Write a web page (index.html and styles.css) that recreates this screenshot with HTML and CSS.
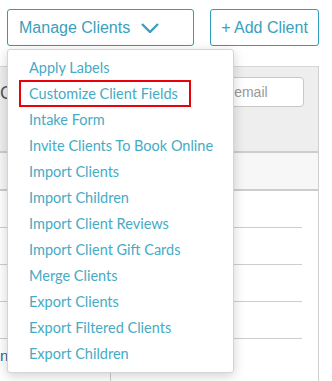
FILE: index.html
```html
<!DOCTYPE html>
<html lang="en">
	<head>
		<meta charset="utf-8">
		<title>Clients</title>
		<link rel="stylesheet" href="styles.css">
	</head>
	<body>
		<div class="toolbar">
			<div class="manage">
				<button type="button" class="btn btn-manage">
					Manage Clients
					<svg class="chevron" width="18" height="10" viewBox="0 0 18 10">
						<polyline points="1,1 9,9 17,1" fill="none" stroke="#3aa0bc" stroke-width="2.4"/>
					</svg>
				</button>
				<ul class="menu">
					<li>Apply Labels</li>
					<li class="marked">Customize Client Fields</li>
					<li>Intake Form</li>
					<li>Invite Clients To Book Online</li>
					<li>Import Clients</li>
					<li>Import Children</li>
					<li>Import Client Reviews</li>
					<li>Import Client Gift Cards</li>
					<li>Merge Clients</li>
					<li>Export Clients</li>
					<li>Export Filtered Clients</li>
					<li>Export Children</li>
				</ul>
			</div>
			<button type="button" class="btn btn-add">+ Add Client</button>
		</div>

		<div class="panel">
			<div class="panel-head">
				<span class="head-title">Clients</span>
				<input type="text" class="search" placeholder="Search by name or email">
			</div>
			<div class="subhead"></div>
			<div class="row"></div>
			<div class="row"></div>
			<div class="row"></div>
			<div class="row"></div>
			<div class="row last">
				<div class="cell-name">n.</div>
			</div>
		</div>
	</body>
</html>
```

FILE: styles.css
```css
body {
	margin: 0;
	font-family: "Liberation Sans", Arial, sans-serif;
	background: #fff;
	overflow: hidden;
}

.toolbar {
	display: flex;
	gap: 16px;
	padding: 9px 0 0 7px;
}

.manage {
	position: relative;
}

.btn {
	height: 37px;
	border: 1px solid #2f9cb8;
	border-radius: 3px;
	background: #fff;
	color: #3aa0bc;
	font-family: "Liberation Sans", Arial, sans-serif;
	font-size: 16px;
	padding: 0 11px;
	display: flex;
	align-items: center;
}

.btn-manage {
	width: 187px;
	gap: 11px;
}

.chevron {
	margin-top: 1px;
}

.btn-add {
	width: 109px;
	justify-content: center;
	padding: 0;
}

.menu {
	position: absolute;
	left: 0;
	top: 40px;
	z-index: 2;
	width: 225px;
	margin: 0;
	padding: 5px 0;
	list-style: none;
	background: #fff;
	border: 1px solid #d4d4d4;
	border-radius: 3px;
	box-shadow: 0 3px 12px rgba(0, 0, 0, 0.18);
}

.menu li {
	height: 26px;
	line-height: 26px;
	padding-left: 21px;
	font-family: Lato, "Open Sans", sans-serif;
	font-size: 14.5px;
	color: #45abc5;
	white-space: nowrap;
}

.menu li.marked {
	margin-left: 11px;
	margin-right: 42px;
	padding-left: 8px;
	height: 23px;
	line-height: 23px;
	margin-top: -1px;
	border: 2px solid #e8000b;
}

.panel {
	margin-top: 20px;
	width: 318px;
	border-top: 1px solid #d6d6d6;
	border-right: 1px solid #cfcfcf;
}

.panel-head {
	height: 84px;
	background: #eee;
	display: flex;
	justify-content: space-between;
	align-items: flex-start;
	padding: 0 14px 0 0;
	box-sizing: border-box;
}

.head-title {
	margin-top: 16px;
	font-size: 18px;
	color: #555;
}

.search {
	margin-top: 10px;
	width: 199px;
	height: 30px;
	box-sizing: border-box;
	border: 1px solid #c8c8c8;
	border-radius: 4px;
	padding: 0 6px;
	font-family: "Liberation Sans", Arial, sans-serif;
	font-size: 14px;
	color: #999;
}

.search::placeholder {
	color: #999;
}

.subhead {
	height: 36px;
	background: #f7f7f7;
	border-top: 2px solid #cdcdcd;
	border-bottom: 2px solid #cdcdcd;
}

.row {
	height: 36px;
	margin-right: 16px;
	border-bottom: 1px solid #cdcdcd;
}

.row.last {
	border-bottom: none;
	margin-right: 0;
	height: 42px;
}

.cell-name {
	width: 111px;
	height: 100%;
	border-right: 1px solid #cdcdcd;
	box-sizing: border-box;
	padding-top: 8px;
	color: #2a6496;
	font-size: 15px;
	line-height: 18px;
}
```
